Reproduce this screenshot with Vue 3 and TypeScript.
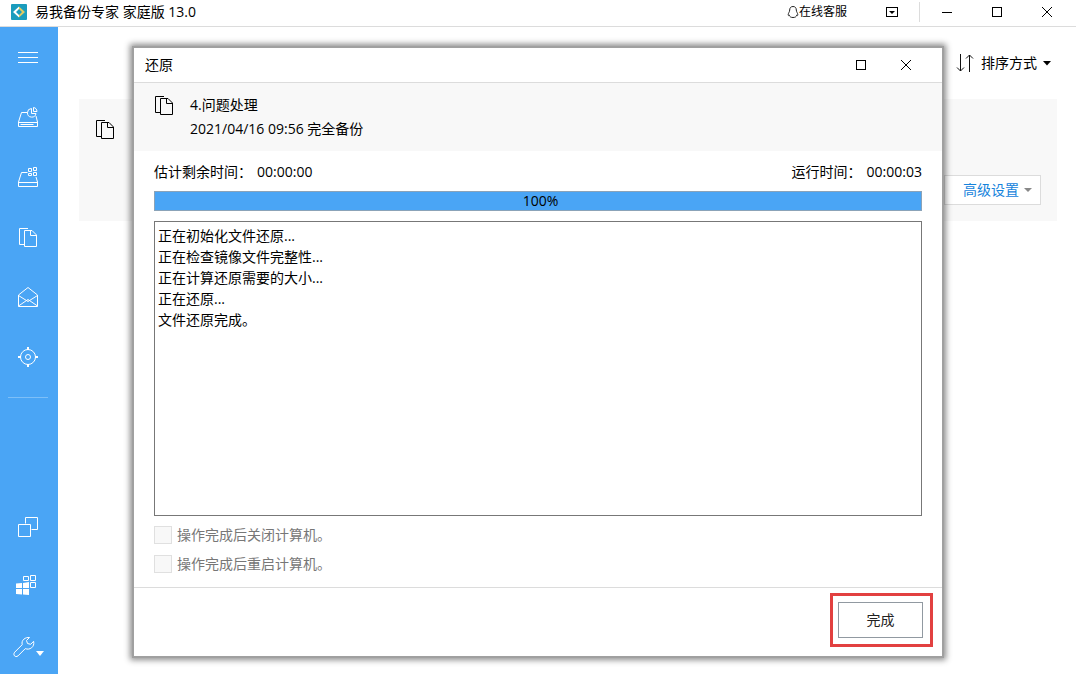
<script setup lang="ts">
import { computed, ref } from 'vue'

const percent = ref(100)
const barStyle = computed(() => ({ width: `${percent.value}%` }))

const log = [
  '正在初始化文件还原...',
  '正在检查镜像文件完整性...',
  '正在计算还原需要的大小...',
  '正在还原...',
  '文件还原完成。',
].join('\n')

const shutdown = ref(false)
const restart = ref(false)
</script>

<template>
  <div class="app">
    <header class="titlebar">
      <svg class="logo" width="16" height="16" viewBox="0 0 16 16" aria-hidden="true">
        <rect width="16" height="16" rx="1" fill="#1a9cbd" />
        <path d="M8 2.500 2 8l6 5.500V11L5 8l3-3z" fill="#fff" />
        <path d="M8 2.500 14 8l-6 5.500V11l3-3-3-3z" fill="#e0cb62" />
      </svg>
      <h1 class="app-name">易我备份专家 家庭版 13.0</h1>
      <a class="service" href="#">
        <svg width="12" height="14" viewBox="0 0 12 14" aria-hidden="true">
          <path d="M6 1.500C3.700 1.500 2.700 3 2.700 5 2.700 7 1.200 8 1.200 9.800c0 .9.600 1 1.100.4.400 1.500 1.500 2.300 3.700 2.300s3.300-.8 3.700-2.300c.5.600 1.100.5 1.100-.4C10.800 8 9.300 7 9.300 5 9.300 3 8.300 1.500 6 1.500z" fill="none" stroke="#222" />
        </svg>
        <span>在线客服</span>
      </a>
      <button class="win menu-btn" type="button" aria-label="菜单">
        <svg width="12" height="12" viewBox="0 0 12 12">
          <rect x=".5" y="1.500" width="11" height="9" fill="none" stroke="#000" />
          <path d="M3 5h6L6 8z" fill="#000" />
        </svg>
      </button>
      <span class="split"></span>
      <button class="win" type="button" aria-label="最小化">
        <svg width="12" height="12" viewBox="0 0 12 12"><path d="M1 6.500h10" stroke="#000" /></svg>
      </button>
      <button class="win" type="button" aria-label="最大化">
        <svg width="12" height="12" viewBox="0 0 12 12"><rect x="1.500" y="1.500" width="9" height="9" fill="none" stroke="#000" /></svg>
      </button>
      <button class="win" type="button" aria-label="关闭">
        <svg width="12" height="12" viewBox="0 0 12 12"><path d="M1 1l10 10M11 1 1 11" stroke="#000" /></svg>
      </button>
    </header>

    <div class="body">
      <nav class="sidebar">
        <button type="button" aria-label="展开菜单">
          <svg width="24" height="24" viewBox="0 0 24 24"><path d="M2 7.500h20M2 12.500h20M2 17.500h20" /></svg>
        </button>
        <button type="button" aria-label="磁盘备份">
          <svg width="24" height="24" viewBox="0 0 24 24">
            <path d="M11.500 7.500H5.500L2.500 17v4.500h19V17l-1.500-6M2.500 17.500h19M4.500 19.500h13" />
            <path d="M15.500 3.500a4.300 4.300 0 1 0 4.500 5h-4.500zM17.500 6.500v-4c2 0 3.500 2 3.500 4z" />
          </svg>
        </button>
        <button type="button" aria-label="系统备份">
          <svg width="24" height="24" viewBox="0 0 24 24">
            <path d="M11.500 7.500H5.500L2.500 17v4.500h19V17l-1.500-5M2.500 17.500h19" />
            <path d="M12.500 3.500h3v3h-3zM17.500 2.500h3v3h-3zM12.500 8.500h3v2h-3zM17.500 7.500h3v3h-3z" />
          </svg>
        </button>
        <button type="button" aria-label="文件备份">
          <svg width="24" height="24" viewBox="0 0 24 24">
            <path d="M12 3.500H3.500v16h5M8.500 5.500h7.500l4.500 4.500v11.500h-12zM14.500 5.500v5h6" />
          </svg>
        </button>
        <button type="button" aria-label="邮件备份">
          <svg width="24" height="24" viewBox="0 0 24 24">
            <path d="M2.500 10 12 2.500l9.500 7.500v11.500h-19zM2.500 10.500l9.500 6 9.500-6M2.500 21l9.500-6.500 9.500 6.500" />
          </svg>
        </button>
        <button type="button" aria-label="智能备份">
          <svg width="24" height="24" viewBox="0 0 24 24">
            <circle cx="12" cy="12" r="7.500" /><circle cx="12" cy="12" r="2.500" />
            <path d="M12 2v3M12 19v3M2 12h3M19 12h3" stroke-width="2" />
          </svg>
        </button>
        <hr class="rule" />
        <button class="push" type="button" aria-label="克隆">
          <svg width="24" height="24" viewBox="0 0 24 24">
            <path d="M9.500 8.500v-6h12v12h-6M2.500 9.500h12v12h-12z" />
          </svg>
        </button>
        <button type="button" aria-label="更多产品">
          <svg width="24" height="24" viewBox="0 0 24 24">
            <path d="M7.500 1.500h5v4h-5zM14.500.5h5v5h-5zM14.500 7.500h5v5h-5z" />
            <path class="solid" d="M0 8.500 6 8v5H0zM7 8l6-1v6H7zM0 14h6v5.500L0 19zM7 14h6v6l-6-.5z" />
          </svg>
        </button>
        <button class="tools" type="button" aria-label="工具">
          <svg width="40" height="25" viewBox="0 0 40 25">
            <path d="M21.500 4.500C17.500 4 13 7 14.200 11.700L6.700 19.200C4.500 21.700 7.200 25 10 22.900L17.300 15.600C21.500 17.500 27 14 25.600 8.300L22.700 11.300 19.500 10.500 18.500 7.500z" />
            <path class="solid" d="M28 18h8l-4 5z" />
          </svg>
        </button>
      </nav>

      <main class="main">
        <div class="toolbar">
          <button class="sort" type="button">
            <svg width="18" height="20" viewBox="0 0 18 20" aria-hidden="true">
              <path d="M4.500 1v17M1 14.500l3.500 3.500L8 14.500M13.500 19V2M10 5.500 13.500 2 17 5.500" fill="none" stroke="#111" />
            </svg>
            <span>排序方式</span>
            <svg width="8" height="5" viewBox="0 0 8 5" aria-hidden="true"><path d="M0 0h8L4 4.500z" fill="#000" /></svg>
          </button>
        </div>
        <section class="card">
          <svg class="doc" width="24" height="24" viewBox="0 0 24 24" aria-hidden="true">
            <path d="M12 3.500H3.500v16h5M8.500 5.500h7.500l4.500 4.500v11.500h-12zM14.500 5.500v5h6" />
          </svg>
          <button class="advanced" type="button">
            <span>高级设置</span>
            <svg width="8" height="5" viewBox="0 0 8 5" aria-hidden="true"><path d="M0 0h8L4 4z" fill="#888" /></svg>
          </button>
        </section>
      </main>
    </div>

    <section class="dialog" role="dialog" aria-labelledby="dialog-title">
      <header class="dialog-bar">
        <h2 id="dialog-title">还原</h2>
        <button class="win" type="button" aria-label="最大化窗口">
          <svg width="12" height="12" viewBox="0 0 12 12"><rect x="1.500" y="1.500" width="9" height="9" fill="none" stroke="#000" /></svg>
        </button>
        <button class="win" type="button" aria-label="关闭窗口">
          <svg width="12" height="12" viewBox="0 0 12 12"><path d="M1 1l10 10M11 1 1 11" stroke="#000" /></svg>
        </button>
      </header>

      <div class="summary">
        <svg class="doc" width="24" height="24" viewBox="0 0 24 24" aria-hidden="true">
          <path d="M12 3.500H3.500v16h5M8.500 5.500h7.500l4.500 4.500v11.500h-12zM14.500 5.500v5h6" />
        </svg>
        <div>
          <p>4.问题处理</p>
          <p>2021/04/16 09:56 完全备份</p>
        </div>
      </div>

      <div class="content">
        <div class="times">
          <p><span>估计剩余时间：</span><span>00:00:00</span></p>
          <p><span>运行时间：</span><span>00:00:03</span></p>
        </div>
        <div class="progress" role="progressbar" aria-label="还原进度" :aria-valuenow="percent">
          <div class="bar" :style="barStyle"></div>
          <span class="percent">{{ percent }}%</span>
        </div>
        <textarea class="log" readonly aria-label="日志" :value="log"></textarea>
        <label class="option"><input v-model="shutdown" type="checkbox" disabled /><span>操作完成后关闭计算机。</span></label>
        <label class="option"><input v-model="restart" type="checkbox" disabled /><span>操作完成后重启计算机。</span></label>
      </div>

      <footer class="dialog-foot">
        <div class="highlight">
          <button class="done" type="button">完成</button>
        </div>
      </footer>
    </section>
  </div>
</template>

<style>
body {
  margin: 0;
}
</style>

<style scoped>
.app,
.app * {
  box-sizing: border-box;
}
.app {
  position: relative;
  display: flex;
  flex-direction: column;
  height: 100vh;
  min-height: 600px;
  overflow: hidden;
  background: #fff;
  color: #000;
  font: 14px/20px "Open Sans", "Noto Sans CJK SC", sans-serif;
}
h1,
h2,
p {
  margin: 0;
  font-size: 14px;
  font-weight: 400;
}
button,
textarea {
  margin: 0;
  padding: 0;
  border: 0;
  background: none;
  color: inherit;
  font: inherit;
}
svg {
  display: block;
  flex: none;
}

.titlebar {
  display: flex;
  align-items: center;
  height: 27px;
  padding: 0 4px 3px 11px;
  border-bottom: 1px solid #dcdcdc;
}
.app-name {
  flex: 1;
  margin-left: 8px;
}
.service {
  display: flex;
  align-items: center;
  color: #000;
  font-size: 12px;
  text-decoration: none;
}
.win {
  display: flex;
  align-items: center;
  justify-content: center;
  width: 50px;
  height: 22px;
}
.menu-btn {
  width: 54px;
  margin-left: 18px;
}
.split {
  width: 1px;
  height: 20px;
  margin-right: 2px;
  background: #dcdcdc;
}

.body {
  display: flex;
  flex: 1;
  min-height: 0;
}
.sidebar {
  display: flex;
  flex-direction: column;
  width: 58px;
  padding-right: 2px;
  background: #4aa5f5;
}
.sidebar button {
  display: flex;
  align-items: center;
  justify-content: center;
  height: 60px;
}
.sidebar path,
.sidebar circle {
  fill: none;
  stroke: #fff;
}
.sidebar .solid {
  fill: #fff;
  stroke: none;
}
.rule {
  width: 40px;
  height: 1px;
  margin: 10px 8px 0;
  border: 0;
  background: #7dbff8;
}
.sidebar .push {
  margin-top: auto;
}
.sidebar .tools {
  height: 57px;
}

.main {
  flex: 1;
  padding: 0 19px 0 21px;
}
.toolbar {
  display: flex;
  align-items: center;
  justify-content: flex-end;
  height: 72px;
  padding-right: 6px;
}
.sort {
  display: flex;
  align-items: center;
}
.sort span {
  margin: 0 6px 0 7px;
}
.card {
  display: flex;
  justify-content: space-between;
  align-items: flex-start;
  min-height: 122px;
  padding: 18px 16px 16px 14px;
  background: #f8f8f8;
}
.doc path {
  fill: none;
  stroke: #000;
}
.advanced {
  display: flex;
  align-items: center;
  align-self: flex-end;
  gap: 5px;
  height: 30px;
  padding: 0 8px 0 18px;
  border: 1px solid #dcdcdc;
  background: #fff;
  color: #1583dc;
}

.dialog {
  position: absolute;
  inset: 46px 132px 16px;
  display: flex;
  flex-direction: column;
  border: 2px solid #a0a0a0;
  background: #fff;
  box-shadow: 0 0 6px 2px rgba(0, 0, 0, 0.45);
}
.dialog-bar {
  display: flex;
  align-items: center;
  height: 35px;
  padding: 0 14px 0 11px;
  border-bottom: 1px solid #dcdcdc;
}
.dialog-bar h2 {
  flex: 1;
}
.dialog-bar .win {
  width: 45px;
}
.summary {
  display: flex;
  gap: 14px;
  padding: 10px 18px;
  background: #f8f8f8;
}
.summary p {
  line-height: 24px;
}
.content {
  display: flex;
  flex: 1;
  flex-direction: column;
  padding: 11px 20px 13px;
}
.times {
  display: flex;
  justify-content: space-between;
}
.times p {
  display: flex;
  gap: 5px;
}
.progress {
  position: relative;
  height: 20px;
  margin: 9px 0 10px;
  border: 1px solid #8ba3b8;
}
.bar {
  height: 100%;
  background: #4aa5f5;
}
.percent {
  position: absolute;
  inset: 0;
  padding-left: 5px;
  line-height: 18px;
  text-align: center;
}
.log {
  display: block;
  flex: 1;
  width: 100%;
  padding: 3px;
  border: 1px solid #777;
  border-radius: 0;
  outline: 0;
  line-height: 21px;
  resize: none;
}
.option {
  display: flex;
  align-items: center;
  gap: 5px;
  height: 20px;
  margin-top: 9px;
  color: #777;
}
.option input {
  width: 18px;
  height: 18px;
  margin: 0;
  appearance: none;
  border: 1px solid #e0e0e0;
  background: #f8f8f8;
}
.dialog-foot {
  display: flex;
  justify-content: flex-end;
  padding: 5px 9px 9px;
  border-top: 1px solid #dcdcdc;
}
.highlight {
  padding: 6px 7px 6px 5px;
  border: 3px solid #e24040;
}
.done {
  display: block;
  width: 85px;
  height: 36px;
  border: 1px solid #9199a1;
  background: #fff;
  color: #222;
}
</style>
